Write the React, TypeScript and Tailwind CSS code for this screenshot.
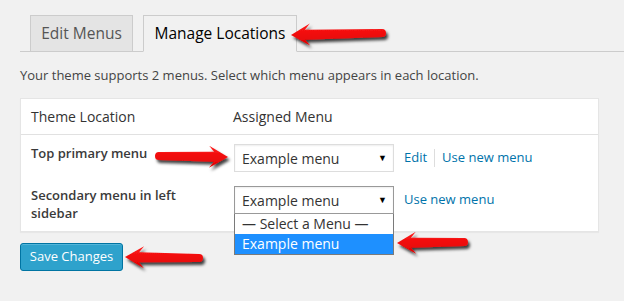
import React from "react";

type Pt = [number, number];

// red callout arrow, tip -> tail
const arrowPath = (tip: Pt, tail: Pt) => {
  const [tx, ty] = tip;
  const [sx, sy] = tail;
  const len = Math.hypot(sx - tx, sy - ty);
  const ux = (sx - tx) / len;
  const uy = (sy - ty) / len;
  const nx = -uy;
  const ny = ux;
  const h = 17;
  const w = 11;
  const p = (a: number, b: number) =>
    `${(tx + ux * a + nx * b).toFixed(1)} ${(ty + uy * a + ny * b).toFixed(1)}`;
  return [
    `M ${p(0, 0)}`,
    `L ${p(h + 2, w)}`,
    `L ${p(h - 3, 5)}`,
    `L ${p(len - 4, 4)}`,
    `A 4 4 0 0 0 ${p(len - 4, -4)}`,
    `L ${p(h - 3, -5)}`,
    `L ${p(h + 2, -w)}`,
    "Z",
  ].join(" ");
};

const arrows: { tip: Pt; tail: Pt }[] = [
  { tip: [291, 35], tail: [386, 33] },
  { tip: [228, 157], tail: [155, 156] },
  { tip: [397, 243], tail: [468, 242] },
  { tip: [125, 257], tail: [203, 258] },
];

const Select = ({ focused, open }: { focused?: boolean; open?: boolean }) => (
  <div className="relative w-[160px]">
    <div
      className={`h-[28px] flex items-center justify-between bg-white border pl-[7px] pr-[6px] text-[14px] text-[#333] shadow-[inset_0_1px_2px_rgba(0,0,0,0.07)] ${
        focused ? "border-[#999]" : "border-[#ddd]"
      }`}
    >
      <span>Example menu</span>
      <span className="text-[9px] text-black">▼</span>
    </div>
    {open && (
      <div className="absolute left-0 top-full z-10 w-full bg-white border border-[#7a7a7a] border-t-0 text-[14px] leading-[20px]">
        <div className="pl-[7px] text-[#333]">— Select a Menu —</div>
        <div className="pl-[7px] bg-[#1e90ff] text-white">Example menu</div>
      </div>
    )}
  </div>
);

export default function App() {
  return (
    <div
      className="relative w-[624px] h-[301px] bg-[#f1f1f1] pt-[15px] pl-[20px] text-[#444] overflow-hidden"
      style={{ fontFamily: '"Open Sans", "Noto Sans", sans-serif' }}
    >
      {/* tabs */}
      <div className="flex items-end border-b border-[#ccc] pl-[10px] gap-[10px]">
        <div className="h-[37px] w-[103px] -mb-px flex items-center justify-center bg-[#e4e4e4] border border-[#ccc] text-[15.5px] text-[#555]">
          Edit Menus
        </div>
        <div className="h-[37px] w-[154px] -mb-px flex items-center justify-center bg-[#f1f1f1] border border-[#ccc] border-b-[#f1f1f1] text-[15.5px] text-black">
          Manage Locations
        </div>
      </div>

      <p className="mt-[13px] text-[13px] leading-[20px] text-[#444]">
        Your theme supports 2 menus. Select which menu appears in each location.
      </p>

      {/* locations table */}
      <div className="mt-[13px] w-[579px] bg-white border border-[#e5e5e5] shadow-[0_1px_1px_rgba(0,0,0,0.04)]">
        <div className="h-[36px] flex items-center border-b border-[#e1e1e1] text-[14px] text-[#333]">
          <div className="w-[202px] pl-[10px]">Theme Location</div>
          <div className="pl-[10px]">Assigned Menu</div>
        </div>

        <div className="flex pt-[9px] pb-[6px]">
          <div className="w-[202px] pl-[10px] text-[13px] leading-[18px] font-semibold text-[#3a3a3a]">
            Top primary menu
          </div>
          <div className="flex items-center pl-[11px] h-[28px]">
            <Select />
            <div className="flex items-center ml-[10px] text-[13px] text-[#0073aa]">
              <span>Edit</span>
              <span className="mx-[7px] h-[18px] w-px bg-[#ddd]" />
              <span>Use new menu</span>
            </div>
          </div>
        </div>

        <div className="flex pt-[8px] pb-[9px]">
          <div className="w-[202px] pl-[10px] pr-[20px] text-[13px] leading-[18px] font-semibold text-[#3a3a3a]">
            Secondary menu in left sidebar
          </div>
          <div className="flex items-start pl-[11px]">
            <Select focused open />
            <div className="ml-[10px] h-[28px] flex items-center text-[13px] text-[#0073aa]">
              Use new menu
            </div>
          </div>
        </div>
      </div>

      <button className="mt-[11px] h-[28px] w-[103px] rounded-[3px] bg-[#2ea2cc] border border-[#0074a2] text-[13px] text-white shadow-[inset_0_1px_0_rgba(120,200,230,0.5)]">
        Save Changes
      </button>

      <svg
        className="absolute inset-0 pointer-events-none"
        width={624}
        height={301}
        viewBox="0 0 624 301"
      >
        <defs>
          <filter id="sh" x="-20%" y="-50%" width="140%" height="200%">
            <feDropShadow dx="2" dy="3" stdDeviation="1.6" floodColor="#000" floodOpacity="0.75" />
          </filter>
          <linearGradient id="rd" x1="0" y1="0" x2="0" y2="1">
            <stop offset="0" stopColor="#ff1a1a" />
            <stop offset="1" stopColor="#e00000" />
          </linearGradient>
        </defs>
        {arrows.map((a, i) => (
          <path key={i} d={arrowPath(a.tip, a.tail)} fill="url(#rd)" filter="url(#sh)" />
        ))}
      </svg>
    </div>
  );
}
